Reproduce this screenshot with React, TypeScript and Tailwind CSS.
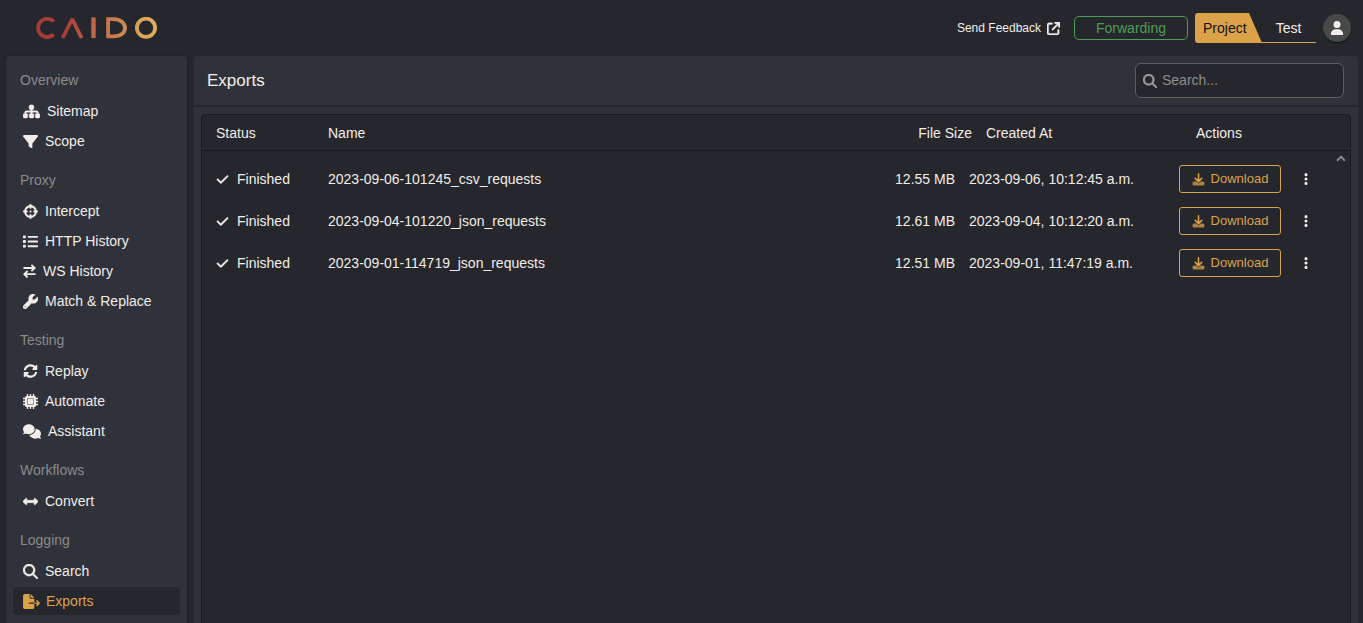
import type { ReactNode } from "react";
import { useState } from "react";
import {
  FaArrowUpRightFromSquare,
  FaCheck,
  FaComments,
  FaCrosshairs,
  FaEllipsisVertical,
  FaFileExport,
  FaFilter,
  FaMagnifyingGlass,
  FaSitemap,
  FaUser,
  FaWrench,
} from "react-icons/fa6";
import { FaArrowsAltH, FaList, FaSyncAlt } from "react-icons/fa";

type NavItem = { label: string; icon: ReactNode };
type NavSection = { title: string; items: NavItem[] };

function SwapIcon() {
  return (
    <svg viewBox="0 0 13 14" className="h-[14px] w-[13px]" aria-hidden="true">
      <path
        d="M.5 4h11M8.4 .8l3.3 3.2-3.3 3.2M12.5 10.2H1.5M4.6 7L1.3 10.2l3.3 3.2"
        fill="none"
        stroke="currentColor"
        strokeWidth="1.8"
      />
    </svg>
  );
}

function ChipIcon() {
  return (
    <svg viewBox="0 0 15 15" className="size-[15px]" aria-hidden="true">
      <path
        d="M4.5 0v15M7.5 0v15M10.5 0v15M0 4.5h15M0 7.5h15M0 10.5h15"
        fill="none"
        stroke="currentColor"
        strokeWidth="1.4"
      />
      <rect x="2" y="2" width="11" height="11" rx="1.6" fill="currentColor" />
      <rect x="4.5" y="4.5" width="6" height="6" fill="none" stroke="#2f323a" strokeWidth="0.8" opacity="0.55" />
    </svg>
  );
}

const sections: NavSection[] = [
  {
    title: "Overview",
    items: [
      { label: "Sitemap", icon: <FaSitemap className="h-[15px] w-[17px] stroke-current stroke-[16]" /> },
      { label: "Scope", icon: <FaFilter className="size-[15px]" /> },
    ],
  },
  {
    title: "Proxy",
    items: [
      { label: "Intercept", icon: <FaCrosshairs className="size-[15px] stroke-current stroke-[6]" /> },
      { label: "HTTP History", icon: <FaList className="size-[15px]" /> },
      { label: "WS History", icon: <SwapIcon /> },
      { label: "Match & Replace", icon: <FaWrench className="size-[15px] stroke-current stroke-[14]" /> },
    ],
  },
  {
    title: "Testing",
    items: [
      { label: "Replay", icon: <FaSyncAlt className="h-[14px] w-[15px]" /> },
      { label: "Automate", icon: <ChipIcon /> },
      { label: "Assistant", icon: <FaComments className="h-[15px] w-[18px]" /> },
    ],
  },
  {
    title: "Workflows",
    items: [{ label: "Convert", icon: <FaArrowsAltH className="size-[15px] stroke-current stroke-[20]" /> }],
  },
  {
    title: "Logging",
    items: [
      { label: "Search", icon: <FaMagnifyingGlass className="size-[15px] stroke-current stroke-[12]" /> },
      { label: "Exports", icon: <FaFileExport className="h-[15px] w-[17px]" /> },
    ],
  },
];

const rows = [
  { name: "2023-09-06-101245_csv_requests", size: "12.55 MB", created: "2023-09-06, 10:12:45 a.m." },
  { name: "2023-09-04-101220_json_requests", size: "12.61 MB", created: "2023-09-04, 10:12:20 a.m." },
  { name: "2023-09-01-114719_json_requests", size: "12.51 MB", created: "2023-09-01, 11:47:19 a.m." },
];

function Logo() {
  return (
    <svg viewBox="0 0 122 22" className="h-[22px] w-[122px]" role="img" aria-label="Caido">
      <defs>
        <linearGradient id="brand" gradientUnits="userSpaceOnUse" x1="0" y1="0" x2="122" y2="0">
          <stop offset="0" stopColor="#a63a38" />
          <stop offset="0.27" stopColor="#aa3f3a" />
          <stop offset="0.45" stopColor="#bf6747" />
          <stop offset="0.72" stopColor="#cd8751" />
          <stop offset="0.85" stopColor="#dba456" />
          <stop offset="1" stopColor="#e0ae5b" />
        </linearGradient>
      </defs>
      <g fill="none" stroke="url(#brand)" strokeWidth="3.8">
        <path d="M17.7 4.5A9.1 9.1 0 1 0 17.7 17.3" />
        <path d="M26.6 21L36.2 2.2L45.6 21" strokeLinejoin="bevel" />
        <path d="M72.1 2.1H77.5C84.5 2.1 89 6 89 10.9S84.5 19.4 77.5 19.4H72.1Z" />
        <circle cx="110" cy="10.8" r="9.1" />
      </g>
      <rect x="55.3" y="0.4" width="4.4" height="20.6" fill="#bf6747" />
    </svg>
  );
}

function DownloadIcon() {
  return (
    <svg viewBox="0 0 13 13" className="size-[13px]" aria-hidden="true">
      <path
        d="M2 8.5h2.4L6.5 10.4 8.6 8.5H11a1.5 1.5 0 0 1 1.5 1.5v1A1.5 1.5 0 0 1 11 12.5H2A1.5 1.5 0 0 1 .5 11v-1A1.5 1.5 0 0 1 2 8.5z"
        fill="currentColor"
        opacity="0.75"
      />
      <path
        d="M6.5.8v7.6M3.2 5.3l3.3 3.3 3.3-3.3"
        fill="none"
        stroke="currentColor"
        strokeWidth="1.6"
        strokeLinecap="round"
        strokeLinejoin="round"
      />
    </svg>
  );
}

function Header() {
  return (
    <header className="flex h-14 shrink-0 items-center justify-between pl-9 pr-3">
      <Logo />
      <div className="flex items-center">
        <a href="#feedback" className="flex items-center gap-[6px] text-[12px]">
          Send Feedback
          <FaArrowUpRightFromSquare className="size-[13px] stroke-current stroke-[14]" />
        </a>
        <button
          type="button"
          className="ml-[14px] h-6 w-[114px] rounded-[5px] border border-[#4f9d55] text-[14px] leading-none text-[#4f9d55]"
        >
          Forwarding
        </button>
        <button type="button" className="ml-[7px] flex h-[30px] text-[14px]">
          <span className="flex h-full w-[67px] items-center rounded-l-[3px] bg-[#dba24a] pl-2 text-[#111] [clip-path:polygon(0_0,54px_0,100%_100%,0_100%)]">
            Project
          </span>
          <span className="-ml-px flex h-full w-[55px] items-center justify-center border-b border-[#dba24a] pt-px">
            Test
          </span>
        </button>
        <button
          type="button"
          aria-label="Account"
          className="ml-[7px] flex size-7 items-center justify-center rounded-full bg-[#464948] shadow-[0_1px_1px_#111]"
        >
          <FaUser className="size-[14px]" />
        </button>
      </div>
    </header>
  );
}

function Sidebar({ active, onSelect }: { active: string; onSelect: (label: string) => void }) {
  return (
    <nav className="flex w-[181px] shrink-0 flex-col gap-[15px] rounded-t-[4px] bg-[#2f323a] px-[7px] pt-[14px] shadow-[0_0_3px_#1c1d21]">
      {sections.map((section) => (
        <section key={section.title}>
          <h2 className="mb-[7px] pl-[7px] text-[14px] leading-5 text-[#8a8a89]">{section.title}</h2>
          <ul className="flex flex-col gap-[2px]">
            {section.items.map((item) => (
              <li key={item.label}>
                <button
                  type="button"
                  onClick={() => onSelect(item.label)}
                  className={
                    item.label === active
                      ? "flex h-7 w-full items-center gap-[6px] rounded-[4px] bg-[#25272d] pl-[10px] text-[14px] text-[#dba24a]"
                      : "flex h-7 w-full items-center gap-[7px] rounded-[4px] pl-[10px] text-[14px]"
                  }
                >
                  {item.icon}
                  {item.label}
                </button>
              </li>
            ))}
          </ul>
        </section>
      ))}
    </nav>
  );
}

function ExportsTable({ query }: { query: string }) {
  const visible = rows.filter((row) => row.name.includes(query.trim()));
  return (
    <div className="flex min-h-0 flex-1 flex-col rounded-t-[4px] border border-b-0 border-[#1a1b1f] bg-[#25272d]">
      <table className="flex min-h-0 flex-1 flex-col text-left text-[14px]">
        <thead className="block border-b border-[#17181b]">
          <tr className="flex h-[35px] items-center px-[7px] pt-px">
            <th className="w-28 px-[7px] font-normal">Status</th>
            <th className="flex-1 px-[7px] font-normal">Name</th>
            <th className="w-24 px-[7px] text-right font-normal">File Size</th>
            <th className="w-[210px] px-[7px] font-normal">Created At</th>
            <th className="w-[154px] px-[7px] font-normal">Actions</th>
          </tr>
        </thead>
        <tbody className="block flex-1 pr-[17px] pt-[7px]">
          {visible.map((row) => (
            <tr key={row.name} className="flex h-[42px] items-center px-[7px]">
              <td className="flex w-28 items-center gap-2 px-[7px]">
                <FaCheck className="size-[13px] stroke-current stroke-[16]" />
                Finished
              </td>
              <td className="flex-1 px-[7px]">{row.name}</td>
              <td className="w-24 px-[7px] text-right">{row.size}</td>
              <td className="w-[210px] px-[7px]">{row.created}</td>
              <td className="flex w-[154px] items-center gap-[11px] pl-[7px]">
                <button
                  type="button"
                  className="flex h-7 w-[102px] shrink-0 items-center justify-center gap-[6px] rounded-[3px] border border-[#dba24a] text-[13px] text-[#dba24a]"
                >
                  <DownloadIcon />
                  Download
                </button>
                <button
                  type="button"
                  aria-label="More actions"
                  className="flex size-7 shrink-0 items-center justify-center"
                >
                  <FaEllipsisVertical className="size-[14px]" />
                </button>
              </td>
            </tr>
          ))}
        </tbody>
      </table>
    </div>
  );
}

export default function App() {
  const [active, setActive] = useState("Exports");
  const [query, setQuery] = useState("");
  return (
    <div className="flex h-screen flex-col overflow-hidden bg-[#25272d] font-['Liberation_Sans',Arial,sans-serif] text-[#f2ede9]">
      <Header />
      <div className="flex min-h-0 flex-1 gap-[7px] pl-[6px] pr-[5px]">
        <Sidebar active={active} onSelect={setActive} />
        <main className="flex min-w-0 flex-1 flex-col rounded-t-[4px] bg-[#2f323a]">
          <div className="flex h-[51px] shrink-0 items-center justify-between border-b-2 border-[#25272d] pl-[13px] pr-[14px]">
            <h1 className="text-[17px]">Exports</h1>
            <label className="flex h-[35px] w-[209px] items-center gap-[5px] rounded-[6px] border border-[#5c5e60] bg-[#25272d] px-[7px] text-[#a3a19f]">
              <FaMagnifyingGlass className="size-[14px] shrink-0 stroke-current stroke-[12]" />
              <input
                type="text"
                aria-label="Search exports"
                placeholder="Search..."
                value={query}
                onChange={(event) => setQuery(event.target.value)}
                className="w-full min-w-0 bg-transparent text-[14px] text-[#f2ede9] outline-none placeholder:text-[#8d8d8c]"
              />
            </label>
          </div>
          <div className="relative flex min-h-0 flex-1 flex-col px-[7px] pt-[7px]">
            <ExportsTable query={query} />
            <svg viewBox="0 0 10 7" className="absolute right-3 top-[48px] h-[7px] w-[10px]" aria-hidden="true">
              <path d="M1 5.7L5 1.7l4 4" fill="none" stroke="#85868a" strokeWidth="2" />
            </svg>
          </div>
        </main>
      </div>
    </div>
  );
}
